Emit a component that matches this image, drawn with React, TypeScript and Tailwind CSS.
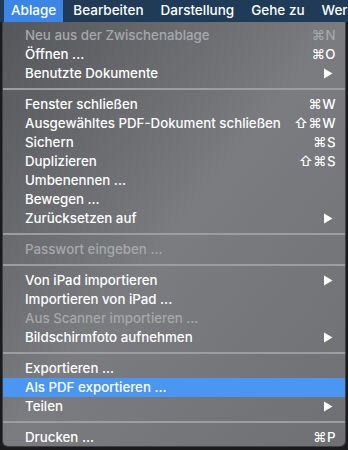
import { ReactNode } from 'react';

type Item = {
  label: string;
  shortcut?: string;
  submenu?: boolean;
  disabled?: boolean;
  active?: boolean;
};

const groups: Item[][] = [
  [
    { label: 'Neu aus der Zwischenablage', shortcut: '⌘N', disabled: true },
    { label: 'Öffnen ...', shortcut: '⌘O' },
    { label: 'Benutzte Dokumente', submenu: true },
  ],
  [
    { label: 'Fenster schließen', shortcut: '⌘W' },
    { label: 'Ausgewähltes PDF-Dokument schließen', shortcut: '⇧⌘W' },
    { label: 'Sichern', shortcut: '⌘S' },
    { label: 'Duplizieren', shortcut: '⇧⌘S' },
    { label: 'Umbenennen ...' },
    { label: 'Bewegen ...' },
    { label: 'Zurücksetzen auf', submenu: true },
  ],
  [{ label: 'Passwort eingeben ...', disabled: true }],
  [
    { label: 'Von iPad importieren', submenu: true },
    { label: 'Importieren von iPad ...' },
    { label: 'Aus Scanner importieren ...', disabled: true },
    { label: 'Bildschirmfoto aufnehmen', submenu: true },
  ],
  [
    { label: 'Exportieren ...' },
    { label: 'Als PDF exportieren ...', active: true },
    { label: 'Teilen', submenu: true },
  ],
  [{ label: 'Drucken ...', shortcut: '⌘P' }],
];

const menus = ['Ablage', 'Bearbeiten', 'Darstellung', 'Gehe zu', 'Werkzeuge'];

function Arrow() {
  return (
    <svg width="10" height="11" viewBox="0 0 10 11" className="mr-[3px]">
      <path d="M1 0.5 L9.5 5.5 L1 10.5 Z" fill="currentColor" />
    </svg>
  );
}

function Row({ item }: { item: Item }) {
  let right: ReactNode = null;
  if (item.submenu) right = <Arrow />;
  else if (item.shortcut) right = <span className="tracking-[0.5px]">{item.shortcut}</span>;

  return (
    <div
      className={
        'flex h-[19px] items-center justify-between pl-[22px] pr-[9px] ' +
        (item.active ? 'bg-[#4a96f3] text-white' : item.disabled ? 'text-[#a6a8ab]' : 'text-white')
      }
    >
      <span>{item.label}</span>
      {right}
    </div>
  );
}

export default function App() {
  return (
    <div
      className="h-[450px] w-[348px] overflow-hidden bg-[#1b1b1d] text-[13.3px] font-medium leading-none"
      style={{ fontFamily: 'Inter, "Liberation Sans", Arial, sans-serif' }}
    >
      <div className="flex h-[22px] items-center bg-[#1f3b58] pl-[4px] text-[13.5px] text-white">
        {menus.map((m, i) => (
          <div
            key={m}
            className={
              'flex h-full shrink-0 items-center px-[7px] ' +
              (i === 0 ? 'bg-[#3a85e6]' : 'ml-[3px]')
            }
          >
            {m}
          </div>
        ))}
      </div>
      <div className="mx-[2px] h-[425px] rounded-b-[6px] border-x border-b border-[#3f4043] bg-gradient-to-br from-[#56575a] via-[#7a7c7f] to-[#6e7073] pt-[4px]">
        {groups.map((g, gi) => (
          <div key={gi}>
            {gi > 0 && <div className="my-[5px] h-[2px] bg-[#9b9da0]" />}
            {g.map((item) => (
              <Row key={item.label} item={item} />
            ))}
          </div>
        ))}
      </div>
    </div>
  );
}
